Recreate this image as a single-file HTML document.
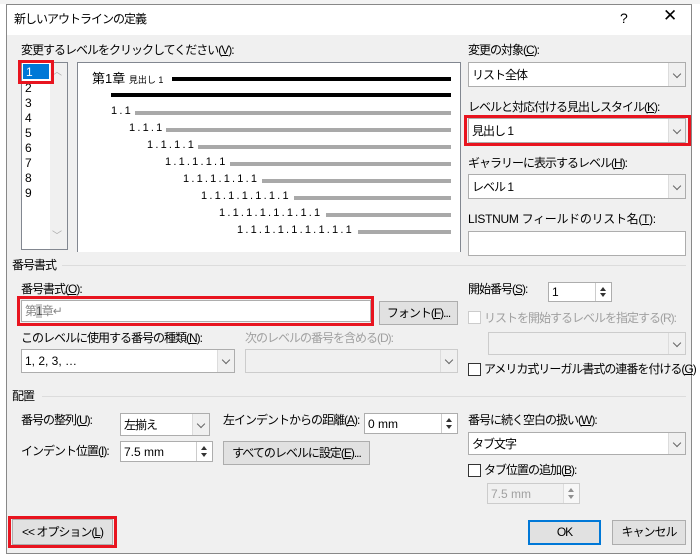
<!DOCTYPE html>
<html><head><meta charset="utf-8"><style>
*{box-sizing:border-box;margin:0;padding:0}
body{width:700px;height:560px;overflow:hidden;background:#fff;font-family:"Liberation Sans","Noto Sans CJK JP",sans-serif;font-size:12px;color:#000;position:relative;letter-spacing:-1px}
.a{position:absolute;white-space:nowrap;line-height:14px}
.dlg{position:absolute;left:6px;top:4px;width:686px;height:550px;background:#f0f0f0;border:1px solid #888}
.tb{position:absolute;left:6px;top:4px;width:686px;height:31px;background:#fff;border:1px solid #888;border-bottom:none}
.box{position:absolute;background:#fff;border:1px solid #adadad}
.dis{background:#f0f0f0;border-color:#ccc}
.dd{position:absolute;right:0;top:0;bottom:0;width:17px;border-left:1px solid #dcdcdc;background:#f0f0f0}
.dd:after{content:"";position:absolute;left:5px;top:50%;margin-top:-4px;width:5px;height:5px;border-right:1px solid #666;border-bottom:1px solid #666;transform:rotate(45deg)}
.btn{position:absolute;background:#e1e1e1;border:1px solid #adadad;text-align:center;line-height:22px}
.red{position:absolute;border:3px solid #e8141f}
.cb{position:absolute;width:13px;height:13px;border:1px solid #333;background:#fff}
.sp{position:absolute;right:0;top:0;bottom:0;width:16px;border-left:1px solid #ccc;background:#fff}
.sp:before,.sp:after{content:"";position:absolute;left:4px;border-left:3px solid transparent;border-right:3px solid transparent}
.sp:before{top:4px;border-bottom:4px solid #333}
.sp:after{bottom:4px;border-top:4px solid #333}
.hl{position:absolute;height:1px;background:#dcdcdc}
.g{color:#a0a0a0}
.ln{position:absolute;height:4px;background:#a9a9a9}
.n{position:absolute;white-space:nowrap;line-height:14px;letter-spacing:2.2px;font-size:11px}
</style></head><body>
<div style="position:absolute;left:0;top:0;width:700px;height:4px;background:#f3f3f3"></div>
<div class="dlg"></div>
<div class="tb"></div>
<div class="a" style="left:14px;top:12px">新しいアウトラインの定義</div>
<div class="a" style="left:620px;top:11px;font-size:14px">?</div>
<div class="a" style="left:663px;top:9px;font-size:17px">✕</div>

<div class="a" style="left:21px;top:43px">変更するレベルをクリックしてください(<u>V</u>):</div>
<div class="box" style="left:21px;top:62px;width:47px;height:188px;border-color:#828790"></div>
<div style="position:absolute;left:50px;top:63px;width:17px;height:186px;background:#f0f0f0"></div>
<div class="a" style="left:52px;top:66px;color:#aaa;font-size:10px">︿</div>
<div class="a" style="left:52px;top:230px;color:#aaa;font-size:10px">﹀</div>
<div style="position:absolute;left:23px;top:64px;width:26px;height:15px;background:#0078d7"></div>
<div class="a" style="left:26px;top:65px;color:#fff">1</div>
<div class="a" style="left:25px;top:81px;line-height:15px">2<br>3<br>4<br>5<br>6<br>7<br>8<br>9</div>
<div class="red" style="left:18px;top:60px;width:36px;height:24px"></div>

<div class="box" style="left:77px;top:62px;width:384px;height:190px;border-color:#828790;border-bottom:none"></div>
<div class="a" style="left:92px;top:72px;font-size:13px;letter-spacing:0">第1章 <span style="font-size:9px">見出し 1</span></div>
<div style="position:absolute;left:172px;top:77px;width:279px;height:4px;background:#000"></div>
<div style="position:absolute;left:111px;top:93px;width:340px;height:4px;background:#000"></div>
<div class="n" style="left:111px;top:104px">1.1</div><div class="ln" style="left:135px;top:111px;width:316px"></div>
<div class="n" style="left:129px;top:121px">1.1.1</div><div class="ln" style="left:166px;top:128px;width:285px"></div>
<div class="n" style="left:147px;top:138px">1.1.1.1</div><div class="ln" style="left:198px;top:145px;width:253px"></div>
<div class="n" style="left:165px;top:155px">1.1.1.1.1</div><div class="ln" style="left:230px;top:162px;width:221px"></div>
<div class="n" style="left:183px;top:172px">1.1.1.1.1.1</div><div class="ln" style="left:262px;top:179px;width:189px"></div>
<div class="n" style="left:201px;top:189px">1.1.1.1.1.1.1</div><div class="ln" style="left:294px;top:196px;width:157px"></div>
<div class="n" style="left:219px;top:206px">1.1.1.1.1.1.1.1</div><div class="ln" style="left:326px;top:213px;width:125px"></div>
<div class="n" style="left:237px;top:223px">1.1.1.1.1.1.1.1.1</div><div class="ln" style="left:358px;top:230px;width:93px"></div>

<div class="a" style="left:468px;top:43px">変更の対象(<u>C</u>):</div>
<div class="box" style="left:468px;top:62px;width:218px;height:25px">
<div class="a" style="left:3px;top:5px">リスト全体</div><div class="dd"></div></div>
<div class="a" style="left:468px;top:100px">レベルと対応付ける見出しスタイル(<u>K</u>):</div>
<div class="box" style="left:468px;top:118px;width:218px;height:25px">
<div class="a" style="left:3px;top:5px">見出し 1</div><div class="dd"></div></div>
<div class="red" style="left:464px;top:115px;width:227px;height:31px"></div>
<div class="a" style="left:468px;top:156px">ギャラリーに表示するレベル(<u>H</u>):</div>
<div class="box" style="left:468px;top:174px;width:218px;height:25px">
<div class="a" style="left:3px;top:5px">レベル 1</div><div class="dd"></div></div>
<div class="a" style="left:468px;top:212px;letter-spacing:-0.3px">LISTNUM フィールドのリスト名(<u>T</u>):</div>
<div class="box" style="left:468px;top:231px;width:218px;height:25px"></div>

<div class="a" style="left:12px;top:258px">番号書式</div>
<div class="hl" style="left:62px;top:265px;width:624px"></div>
<div class="a" style="left:21px;top:282px">番号書式(<u>O</u>):</div>
<div class="box" style="left:21px;top:300px;width:350px;height:22px">
<div class="a" style="left:3px;top:3px;color:#888">第<span style="background:#ccc;color:#555">1</span>章↵</div></div>
<div class="red" style="left:17px;top:296px;width:357px;height:30px"></div>
<div class="btn" style="left:379px;top:301px;width:79px;height:24px">フォント(<u>F</u>)...</div>
<div class="a" style="left:21px;top:331px">このレベルに使用する番号の種類(<u>N</u>):</div>
<div class="box" style="left:21px;top:349px;width:214px;height:24px">
<div class="a" style="left:3px;top:4px;letter-spacing:0">1, 2, 3, …</div><div class="dd"></div></div>
<div class="a g" style="left:245px;top:331px">次のレベルの番号を含める(D):</div>
<div class="box dis" style="left:245px;top:349px;width:213px;height:24px"><div class="dd"></div></div>

<div class="a" style="left:468px;top:282px">開始番号(<u>S</u>):</div>
<div class="box" style="left:548px;top:282px;width:64px;height:20px"><div class="a" style="left:3px;top:2px">1</div><div class="sp"></div></div>
<div class="cb" style="left:468px;top:311px;border-color:#ccc"></div>
<div class="a g" style="left:484px;top:311px">リストを開始するレベルを指定する(R):</div>
<div class="box dis" style="left:488px;top:332px;width:198px;height:23px"><div class="dd"></div></div>
<div class="cb" style="left:468px;top:363px"></div>
<div class="a" style="left:484px;top:362px">アメリカ式リーガル書式の連番を付ける(<u>G</u>)</div>

<div class="a" style="left:12px;top:389px">配置</div>
<div class="hl" style="left:42px;top:396px;width:644px"></div>
<div class="a" style="left:21px;top:413px">番号の整列(<u>U</u>):</div>
<div class="box" style="left:120px;top:413px;width:90px;height:23px"><div class="a" style="left:3px;top:4px">左揃え</div><div class="dd"></div></div>
<div class="a" style="left:223px;top:413px">左インデントからの距離(<u>A</u>):</div>
<div class="box" style="left:364px;top:413px;width:94px;height:21px"><div class="a" style="left:3px;top:3px;letter-spacing:0">0 mm</div><div class="sp"></div></div>
<div class="a" style="left:21px;top:444px">インデント位置(<u>I</u>):</div>
<div class="box" style="left:120px;top:441px;width:93px;height:21px"><div class="a" style="left:3px;top:3px;letter-spacing:0">7.5 mm</div><div class="sp"></div></div>
<div class="btn" style="left:223px;top:441px;width:147px;height:24px">すべてのレベルに設定(<u>E</u>)...</div>

<div class="a" style="left:468px;top:413px">番号に続く空白の扱い(<u>W</u>):</div>
<div class="box" style="left:468px;top:432px;width:218px;height:23px"><div class="a" style="left:3px;top:4px">タブ文字</div><div class="dd"></div></div>
<div class="cb" style="left:468px;top:464px"></div>
<div class="a" style="left:484px;top:463px">タブ位置の追加(<u>B</u>):</div>
<div class="box dis" style="left:487px;top:483px;width:93px;height:21px"><div class="a g" style="left:3px;top:3px;letter-spacing:0">7.5 mm</div><div class="sp" style="opacity:.5"></div></div>

<div class="btn" style="left:12px;top:519px;width:101px;height:26px;line-height:24px">&lt;&lt; オプション(<u>L</u>)</div>
<div class="red" style="left:8px;top:516px;width:109px;height:32px"></div>
<div class="btn" style="left:528px;top:520px;width:73px;height:25px;border:2px solid #0078d7;line-height:21px">OK</div>
<div class="btn" style="left:612px;top:520px;width:74px;height:25px">キャンセル</div>
</body></html>
